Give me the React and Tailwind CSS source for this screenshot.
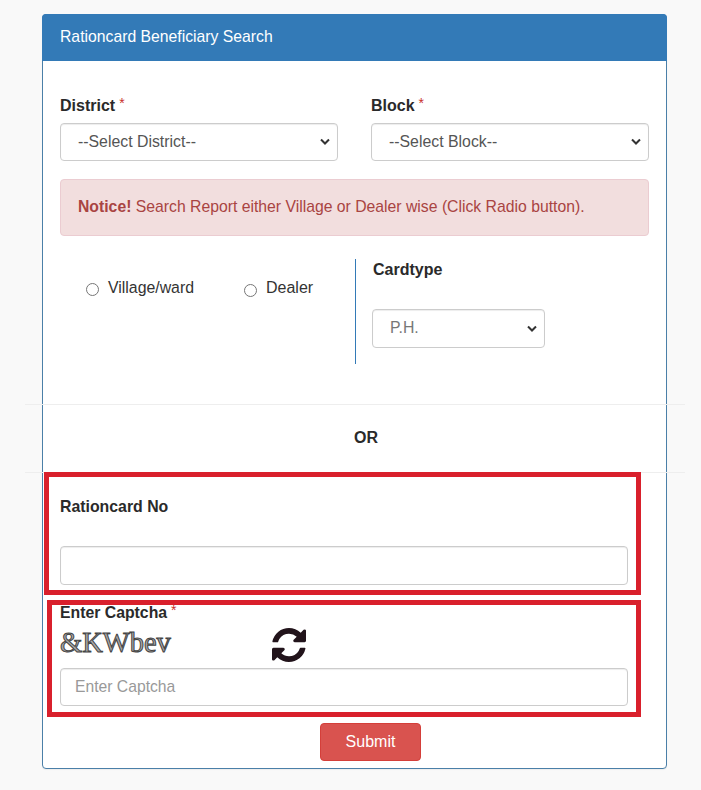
const Req = () => <span className="text-[#c9302c] text-[14px] relative -top-[3px] ml-[4px] font-normal">*</span>;

// bootstrap style select, arrow sits inside the padding like the original
const Select = ({ label, className, textClass }) => (
  <div className={`relative ${className}`}>
    <select className={`block w-full h-full appearance-none pl-[17px] pb-[1px] bg-white border border-[#ccc] rounded-[4px] text-[15.85px] shadow-[inset_0_1px_1px_rgba(0,0,0,0.075)] ${textClass}`}>
      <option>{label}</option>
    </select>
    <svg viewBox="0 0 10 7" className="absolute right-[8px] top-1/2 -translate-y-1/2 w-[10px] h-[7px] pointer-events-none" fill="none" stroke="#333" strokeWidth="2">
      <path d="M1 1l4 4 4-4" />
    </svg>
  </div>
);

const App = () => {
  return (
    <div className="min-h-[790px] bg-[#f9f9f9] pt-[14px] pb-[20px] font-['Liberation_Sans',Arial,sans-serif] text-[16px] text-[#333]">
      <div className="ml-[42px] w-[625px] h-[755px] bg-white border border-[#4a7fa8] rounded-[4px] shadow-[0_1px_1px_rgba(0,0,0,0.05)]">
        <div className="-mx-px -mt-px h-[47px] bg-[#337ab7] text-white text-[15.75px] rounded-t-[4px] pl-[18px] pb-[2px] flex items-center">
          Rationcard Beneficiary Search
        </div>

        <div className="px-[17px] pt-[33px]">
          <div className="flex gap-[33px]">
            <div className="w-[278px]">
              <label className="block h-[29px] leading-[24px] font-bold text-[#2a2a2a]">District<Req /></label>
              <Select label="--Select District--" className="w-full h-[38px]" textClass="text-[#555]" />
            </div>
            <div className="w-[278px]">
              <label className="block h-[29px] leading-[24px] font-bold text-[#2a2a2a]">Block<Req /></label>
              <Select label="--Select Block--" className="w-full h-[38px]" textClass="text-[#555]" />
            </div>
          </div>

          <div className="mt-[18px] h-[57px] w-[589px] bg-[#f2dede] border border-[#ebccd1] rounded-[4px] text-[#a94442] text-[15.75px] pl-[17px] pb-[2px] flex items-center">
            <p><strong>Notice!</strong> Search Report either Village or Dealer wise (Click Radio button).</p>
          </div>

          <div className="mt-[23px] flex h-[105px]">
            <div className="w-[295px] pl-[26px] pt-[17px] flex items-start">
              <label className="flex items-center gap-[9px] w-[158px]">
                <input type="radio" name="mode" className="w-[13px] h-[13px] mt-[4px]" />
                <span className="text-[15.85px]">Village/ward</span>
              </label>
              <label className="flex items-center gap-[9px]">
                <input type="radio" name="mode" className="w-[13px] h-[13px] mt-[4px]" />
                <span>Dealer</span>
              </label>
            </div>
            <div className="w-px bg-[#337ab7]" />
            <div className="pl-[16px] pt-[2px]">
              <label className="block h-[48px] pl-px leading-[18px] font-bold text-[#2a2a2a]">Cardtype</label>
              <Select label="P.H." className="w-[173px] h-[39px]" textClass="text-[#777]" />
            </div>
          </div>
        </div>

        <div className="mt-[40px] -ml-[18px] w-[660px] border-t border-[#eee]" />
        <div className="h-[67px] flex items-center pl-[311px] pb-[2px] font-bold text-[#2a2a2a]">OR</div>
        <div className="-ml-[18px] w-[660px] border-t border-[#eee]" />

        <div className="ml-px w-[597px] h-[123px] -mt-px border-[5px] border-[#d9202c] pl-[11px] pt-[20px]">
          <label className="block h-[49px] leading-[20px] text-[15.85px] font-bold text-[#2a2a2a]">Rationcard No</label>
          <input className="block w-[568px] h-[39px] px-[12px] bg-white border border-[#ccc] rounded-[4px] shadow-[inset_0_1px_1px_rgba(0,0,0,0.075)]" />
        </div>

        <div className="ml-[4px] mt-[5px] w-[594px] h-[117px] border-[5px] border-[#d9202c] pl-[8px]">
          <label className="block h-[18px] leading-[16px] text-[15.8px] font-bold text-[#2a2a2a]">Enter Captcha<Req /></label>
          <div className="h-[45px] flex items-center">
            <span className="w-[212px] pb-[4px] font-['Liberation_Serif',serif] text-[28.5px] leading-none text-[#aaa] [-webkit-text-stroke:1px_#444]">&amp;KWbev</span>
            <svg viewBox="128 128 1536 1536" className="w-[34px] h-[34px] mb-[2px]" fill="#22141b">
              <path d="M1639 1056q0 5-1 7-64 268-268 434.5t-478 166.5q-146 0-282.5-55t-243.5-157l-129 129q-19 19-45 19t-45-19-19-45v-448q0-26 19-45t45-19h448q26 0 45 19t19 45-19 45l-137 137q71 66 161 102t187 36q134 0 250-65t186-179q11-17 53-117 8-23 30-23h192q13 0 22.5 9.5t9.5 22.5zm25-800v448q0 26-19 45t-45 19h-448q-26 0-45-19t-19-45 19-45l138-138q-148-137-349-137-134 0-250 65t-186 179q-11 17-53 117-8 23-30 23h-199q-13 0-22.5-9.5t-9.5-22.5v-7q65-268 270-434.5t480-166.5q146 0 284 55.5t245 156.5l130-129q19-19 45-19t45 19 19 45z" />
            </svg>
          </div>
          <input
            placeholder="Enter Captcha"
            className="block w-[568px] h-[38px] px-[14px] bg-white border border-[#ccc] rounded-[4px] text-[15.7px] placeholder:text-[#999] shadow-[inset_0_1px_1px_rgba(0,0,0,0.075)]"
          />
        </div>

        <div className="mt-[6px] pl-[277px]">
          <button className="w-[101px] h-[38px] bg-[#d9534f] border border-[#d43f3a] rounded-[4px] text-white">Submit</button>
        </div>
      </div>
    </div>
  );
};

export default App;
